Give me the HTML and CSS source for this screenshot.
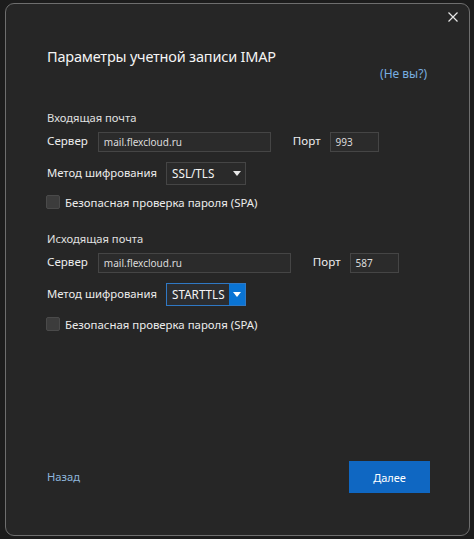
FILE: index.html
```html
<!DOCTYPE html>
<html lang="ru">
<head>
<meta charset="utf-8">
<link rel="stylesheet" href="styles.css">
</head>
<body>
<div class="window">
  <div class="topbar">
    <svg class="close" width="10" height="10" viewBox="0 0 10 10"><path d="M0.5 0.5 L9.5 9.5 M9.5 0.5 L0.5 9.5" stroke="#e6e6e6" stroke-width="1.2" fill="none"/></svg>
  </div>
  <h1 class="title">Параметры учетной записи IMAP</h1>
  <div class="notyou-row"><a class="link notyou">(Не вы?)</a></div>

  <section class="group first">
    <div class="group-title">Входящая почта</div>
    <div class="row">
      <span class="label">Сервер</span>
      <div class="input server in-server">mail.flexcloud.ru</div>
      <span class="label port-label">Порт</span>
      <div class="input port">993</div>
    </div>
    <div class="row method">
      <span class="label method-label">Метод шифрования</span>
      <div class="select"><span class="sel-text">SSL/TLS</span><span class="arrow"><svg width="8" height="5" viewBox="0 0 8 5"><path d="M0 0 H8 L4 5 Z" fill="#e8e8e8"/></svg></span></div>
    </div>
    <label class="check-row"><span class="checkbox"></span><span class="check-label">Безопасная проверка пароля (SPA)</span></label>
  </section>

  <section class="group second">
    <div class="group-title">Исходящая почта</div>
    <div class="row">
      <span class="label">Сервер</span>
      <div class="input server out-server">mail.flexcloud.ru</div>
      <span class="label port-label">Порт</span>
      <div class="input port">587</div>
    </div>
    <div class="row method">
      <span class="label method-label">Метод шифрования</span>
      <div class="select focused"><span class="sel-text">STARTTLS</span><span class="arrow blue"><svg width="8" height="5" viewBox="0 0 8 5"><path d="M0 0 H8 L4 5 Z" fill="#ffffff"/></svg></span></div>
    </div>
    <label class="check-row"><span class="checkbox"></span><span class="check-label">Безопасная проверка пароля (SPA)</span></label>
  </section>

  <div class="spacer"></div>
  <div class="footer">
    <a class="link back">Назад</a>
    <button class="primary">Далее</button>
  </div>
</div>
</body>
</html>
```
FILE: styles.css
```css
html, body {
  margin: 0;
  padding: 0;
}
body {
  background: #1c1c1c;
  width: 474px;
  height: 539px;
  overflow: hidden;
  font-family: "Noto Sans", "Open Sans", sans-serif;
  color: #e8e8e8;
}
.window {
  box-sizing: border-box;
  margin: 3px 0 0 5px;
  width: 465px;
  height: 533px;
  border: 1.5px solid #6e6e6e;
  border-radius: 9px;
  background: #262626;
  padding: 0 39px 0 41px;
  display: flex;
  flex-direction: column;
}
.topbar {
  display: flex;
  justify-content: flex-end;
  height: 10px;
  margin-right: -28px;
  padding-top: 8px;
}
.close {
  display: block;
}
.title {
  margin: 22px 0 0 0;
  font-size: 14.5px;
  font-weight: 400;
  color: #f4f4f4;
  line-height: 24px;
  letter-spacing: -0.2px;
}
.notyou-row {
  display: flex;
  justify-content: flex-end;
  margin-top: -2px;
  margin-right: 3px;
}
.link {
  color: #78aee0;
  font-size: 12px;
  line-height: 16px;
}
.group.first {
  margin-top: 28px;
}
.group.second {
  margin-top: 22px;
}
.group-title {
  font-size: 11.2px;
  line-height: 16px;
  color: #e0e0e0;
}
.row {
  display: flex;
  align-items: center;
  margin-top: 6px;
  height: 20px;
}
.row.method {
  margin-top: 10px;
  height: 23px;
}
.label {
  font-size: 11.6px;
  color: #ececec;
  line-height: 16px;
  margin-top: -2px;
}
.method-label {
  font-size: 11.3px;
}
.input {
  box-sizing: border-box;
  height: 20px;
  background: #2b2b2b;
  border: 1px solid #454545;
  font-size: 10px;
  color: #dcdcdc;
  padding: 3px 0 0 5px;
  line-height: 13px;
}
.server {
  margin-left: 10px;
}
.in-server { width: 173px; }
.out-server { width: 193px; }
.port-label {
  margin-left: 22px;
}
.port {
  margin-left: 9px;
  width: 49px;
}
.select {
  box-sizing: border-box;
  margin-left: 9px;
  width: 80px;
  height: 23px;
  display: flex;
  border: 1px solid #454545;
  background: #2a2a2a;
}
.select.focused {
  border-color: #2f78c4;
  background: #2b2d30;
}
.sel-text {
  flex: 1;
  font-size: 11.7px;
  line-height: 21px;
  padding-left: 5px;
  color: #f4f4f4;
}
.arrow {
  width: 16px;
  display: flex;
  align-items: center;
  justify-content: center;
}
.arrow.blue {
  background: #0a74d4;
}
.check-row {
  display: flex;
  align-items: center;
  margin-top: 10px;
  height: 14px;
}
.group.second .check-row {
  margin-top: 11px;
}
.checkbox {
  box-sizing: border-box;
  width: 14px;
  height: 14px;
  background: #3c3c3c;
  border: 1px solid #4a4a4a;
  border-radius: 2px;
  margin-left: -1px;
}
.check-label {
  margin-left: 5px;
  font-size: 11.4px;
  color: #ececec;
}
.spacer {
  flex: 1;
}
.footer {
  display: flex;
  align-items: center;
  justify-content: space-between;
  margin-bottom: 42px;
  margin-right: 0;
}
.back {
  font-size: 11.2px;
  color: #8fb6dc;
}
.primary {
  width: 81px;
  height: 32px;
  background: #0f67c2;
  border: none;
  color: #ffffff;
  font-family: "Noto Sans", sans-serif;
  font-size: 11px;
  padding: 0;
}
```
